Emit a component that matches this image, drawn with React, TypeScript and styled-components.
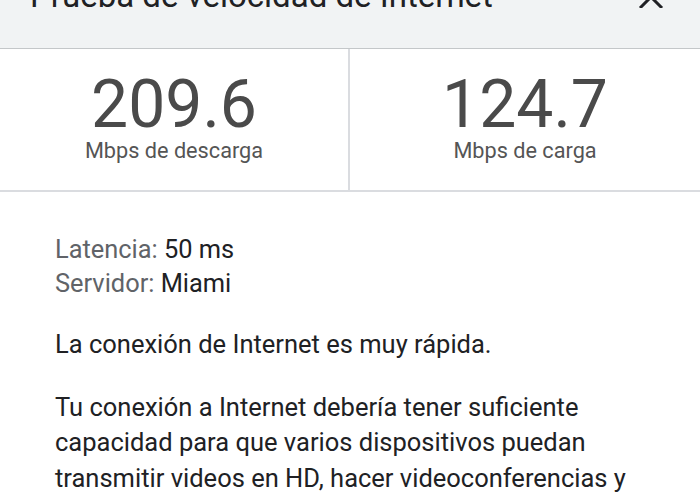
import React from "react";
import styled, { createGlobalStyle } from "styled-components";

const Global = createGlobalStyle`
  html, body { margin: 0; padding: 0; background: #ffffff; }
  body { font-family: Roboto, "Noto Sans", Arial, sans-serif; overflow: hidden; }
`;

const Page = styled.div`
  width: 700px;
  height: 500px;
  overflow: hidden;
  background: #ffffff;
`;

const Header = styled.header`
  height: 48px;
  background: #f1f3f4;
  border-bottom: 1px solid #c4c7c9;
  display: flex;
  align-items: flex-start;
  justify-content: space-between;
  padding: 0 34px 0 30px;
  box-sizing: content-box;
  overflow: hidden;
`;

const Title = styled.h1`
  margin: -24px 0 0 0;
  font-size: 33px;
  line-height: 40px;
  font-weight: 400;
  color: #202124;
  white-space: nowrap;
`;

const Close = styled.svg`
  margin-top: -14px;
  width: 28px;
  height: 22px;
`;

const Stats = styled.section`
  display: grid;
  grid-template-columns: 1fr 1fr;
  border-bottom: 2px solid #dadce0;
`;

const Stat = styled.div<{ $divider?: boolean }>`
  height: 141px;
  display: flex;
  flex-direction: column;
  align-items: center;
  justify-content: center;
  border-right: ${(p) => (p.$divider ? "2px solid #dadce0" : "none")};
  padding-bottom: 2px;
  box-sizing: border-box;
`;

const Value = styled.div`
  font-size: 66px;
  line-height: 62px;
  color: #4a4a4a;
  font-weight: 400;
`;

const Unit = styled.div`
  font-size: 21.7px;
  line-height: 26px;
  color: #555555;
  margin-top: 2px;
`;

const Body = styled.section`
  padding: 40px 55px 0 55px;
`;

const Meta = styled.div`
  font-size: 25.4px;
  line-height: 34px;
  color: #202124;
`;

const MetaLabel = styled.span`
  color: #606368;
`;

const Para = styled.p<{ $gap: number }>`
  margin: ${(p) => p.$gap}px 0 0 0;
  font-size: 25.5px;
  line-height: 35.5px;
  color: #202124;
`;

export default function App() {
  return (
    <Page>
      <Global />
      <Header>
        <Title>Prueba de velocidad de Internet</Title>
        <Close viewBox="0 0 28 22">
          <path d="M2 0 L24 22 M24 0 L2 22" stroke="#202124" strokeWidth="3" fill="none" />
        </Close>
      </Header>
      <Stats>
        <Stat $divider>
          <Value>209.6</Value>
          <Unit>Mbps de descarga</Unit>
        </Stat>
        <Stat>
          <Value>124.7</Value>
          <Unit>Mbps de carga</Unit>
        </Stat>
      </Stats>
      <Body>
        <Meta>
          <MetaLabel>Latencia:</MetaLabel> 50 ms
        </Meta>
        <Meta>
          <MetaLabel>Servidor:</MetaLabel> Miami
        </Meta>
        <Para $gap={27}>La conexión de Internet es muy rápida.</Para>
        <Para $gap={27}>
          Tu conexión a Internet debería tener suficiente capacidad para que varios dispositivos puedan
          transmitir videos en HD, hacer videoconferencias y
        </Para>
      </Body>
    </Page>
  );
}
